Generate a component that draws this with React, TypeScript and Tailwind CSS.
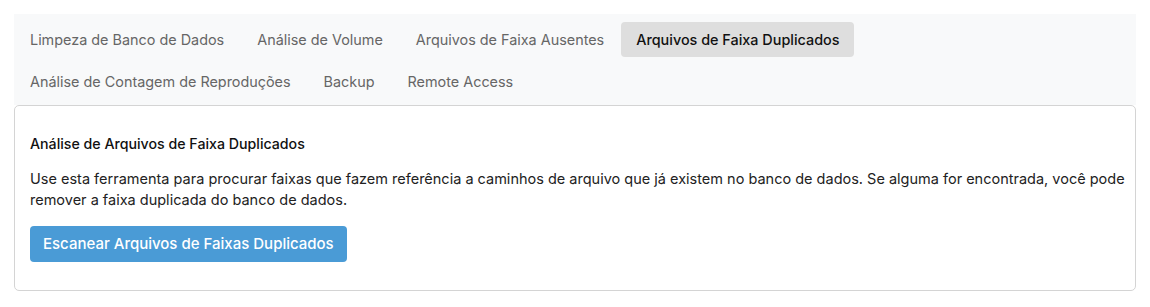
import React from "react";

const tabs = [
    "Limpeza de Banco de Dados",
    "Análise de Volume",
    "Arquivos de Faixa Ausentes",
    "Arquivos de Faixa Duplicados",
    "Análise de Contagem de Reproduções",
    "Backup",
    "Remote Access",
];

const ACTIVE = "Arquivos de Faixa Duplicados";

export default function App() {
    return (
        <div className="min-h-screen bg-white p-[14px] font-['Inter',sans-serif]">
            {/* Tab bar */}
            <nav className="flex flex-wrap gap-x-[1px] gap-y-[7px] bg-[#f8f9fa] pt-2 pb-[6px]">
                {tabs.map((tab) => (
                    <button
                        key={tab}
                        className={
                            tab === ACTIVE
                                ? "h-[35px] rounded-[4px] bg-[#dedede] px-[15px] text-[14.4px] font-medium text-[#111]"
                                : "h-[35px] rounded-[4px] px-4 text-[14.4px] text-[#666]"
                        }
                    >
                        {tab}
                    </button>
                ))}
            </nav>

            {/* Panel */}
            <div className="rounded-[5px] border border-[#d4d4d4] pl-[15px] pr-[6px] pt-[28px] pb-[28px]">
                <h3 className="text-[14.2px] leading-5 font-medium text-[#111]">
                    Análise de Arquivos de Faixa Duplicados
                </h3>
                <p className="mt-[14px] text-[14.5px] leading-[21px] text-[#222]">
                    Use esta ferramenta para procurar faixas que fazem referência a caminhos de arquivo que já existem no banco de dados. Se alguma for encontrada, você pode remover a faixa duplicada do banco de dados.
                </p>
                <button className="mt-4 h-9 rounded-[4px] bg-[#4a9bd6] px-[13px] text-[15px] font-medium text-white">
                    Escanear Arquivos de Faixas Duplicados
                </button>
            </div>
        </div>
    );
}
